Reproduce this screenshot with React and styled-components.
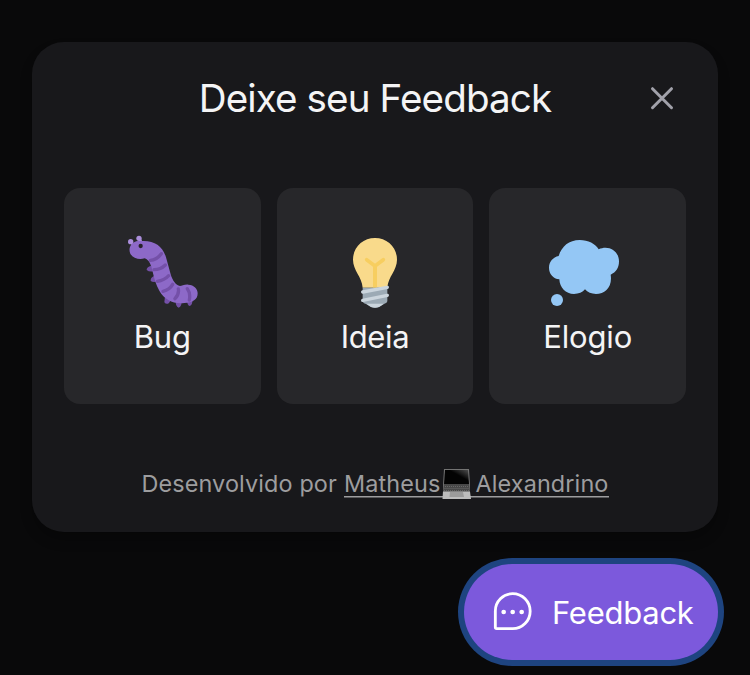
import React from 'react';
import styled, { createGlobalStyle } from 'styled-components';

const GlobalStyle = createGlobalStyle`
  *, *::before, *::after { box-sizing: border-box; }
  body { margin: 0; background: #09090a; font-family: Inter, "Liberation Sans", sans-serif; font-weight: 400; color: #f4f4f5; overflow: hidden; }
  button { font: inherit; color: inherit; border: 0; padding: 0; cursor: pointer; }
`;

const Page = styled.main`
  width: 750px;
  height: 675px;
  padding: 42px 32px 0;
  display: flex;
  flex-direction: column;
  align-items: flex-end;
  gap: 32px;
`;

const Panel = styled.section`
  width: 686px;
  height: 490px;
  padding: 32px;
  border-radius: 32px;
  background: #18181b;
  box-shadow: 0 8px 12px rgba(0, 0, 0, 0.25);
  display: flex;
  flex-direction: column;
`;

const Header = styled.header`
  height: 50px;
  display: grid;
  grid-template-columns: 48px 1fr 48px;
  align-items: center;
`;

const Title = styled.h1`
  grid-column: 2;
  margin: 0;
  font-size: 38.6px;
  font-weight: inherit;
  line-height: 48px;
  padding-bottom: 2px;
  letter-spacing: -0.88px;
  text-align: center;
  white-space: nowrap;
`;

const CloseButton = styled.button`
  width: 48px;
  height: 48px;
  background: none;
  display: grid;
  place-items: center;
`;

const Options = styled.div`
  padding: 64px 0;
  display: grid;
  grid-template-columns: repeat(3, 1fr);
  gap: 16px;
`;

const Option = styled.button`
  height: 216px;
  border-radius: 16px;
  background: #27272a;
  display: flex;
  flex-direction: column;
  align-items: center;
  justify-content: center;
`;

const OptionIcon = styled.svg`
  width: 80px;
  height: 80px;
`;

const OptionLabel = styled.span`
  font-size: 31px;
  line-height: 46px;
  padding-top: 2px;
  letter-spacing: ${({ $tracking }) => $tracking}px;
`;

const Footer = styled.footer`
  height: 32px;
  display: flex;
  justify-content: center;
  gap: 7px;
  color: #9d9d9f;
  font-size: 23.4px;
  line-height: 32px;
  letter-spacing: 0.13px;
  white-space: nowrap;
`;

const AuthorLink = styled.a`
  display: flex;
  background: linear-gradient(#9d9d9f, #9d9d9f) 0 28px / 100% 1.5px no-repeat;
`;

const Laptop = styled.svg`
  width: 30px;
  height: 32px;
  margin: 0 3px 0 2px;
`;

const FeedbackButton = styled.button`
  width: 254px;
  height: 96px;
  border-radius: 48px;
  background: #7c59dc;
  box-shadow: 0 0 0 6px #1e4480;
  color: #fff;
  display: flex;
  align-items: center;
  padding: 0 24px;
  gap: 16px;
  font-size: 31px;
  letter-spacing: -0.25px;
`;

const ChatIcon = styled.svg`
  width: 48px;
  height: 48px;
  flex: none;
`;

const BugArt = () => (
  <OptionIcon viewBox="35 36 240 240" aria-hidden="true">
    <g stroke="#ab8edb" strokeWidth="7" strokeLinecap="round">
      <path d="M63 68l7 8M88 56l6 12" />
    </g>
    <g fill="#ab8edb"><circle cx="61" cy="65" r="8" /><circle cx="86" cy="55" r="8" /></g>
    <path fill="#7450a8" d="M123 137q-15 4-14 13 7 6 20 4zM131 168q-11 5-10 15 8 5 20 1zM164 229l-2 18q6 8 14 2l7-11zM196 241q-1 20 9 22 10-2 9-22zM230 242q1 13 8 16 9-3 8-18z" />
    <path fill="#8d69c8" d="M100 63C135 63 157 80 167 112L181 163C187 183 197 196 209 198C214 198 222 193 234 194C251 195 262 206 262 220C262 239 247 248 222 249C190 253 163 240 147 212C137 194 132 177 127 155C122 136 118 120 103 115C88 120 68 116 60 101C52 83 64 65 83 63Z" />
    <g fill="none" stroke="#7450a8" strokeWidth="10" strokeLinecap="round">
      <path d="M120 121Q139 120 153 101M131 149Q151 149 165 135M141 184Q162 181 175 167M158 214Q178 209 187 193M194 236Q207 222 204 207M237 240Q241 219 231 206" />
    </g>
    <circle cx="91" cy="78" r="6.5" fill="#272229" />
  </OptionIcon>
);

const BulbArt = () => (
  <OptionIcon viewBox="0 21 240 240" aria-hidden="true">
    <path fill="#f9da8b" d="M120 39C157 39 186 67 186 104C186 136 159 155 157 188H83C81 155 54 136 54 104C54 67 83 39 120 39Z" />
    <path fill="none" stroke="#f7ce60" strokeWidth="11" strokeLinecap="round" strokeLinejoin="round" d="M95 104L120 123L145 104" />
    <path stroke="#f7ce60" strokeWidth="12" d="M120 122V188" />
    <path fill="#9caab5" d="M83 188H157V229Q157 234 147 237L132 246Q120 251 108 246L93 237Q83 234 83 228Z" />
    <path fill="none" stroke="#cbd5dd" strokeWidth="10" strokeLinecap="round" d="M83 201L157 187M83 226L157 211" />
    <path fill="#cbd5dd" d="M94 236H146Q139 242 132 246Q120 251 108 246Z" />
  </OptionIcon>
);

const CloudArt = () => (
  <OptionIcon viewBox="39 21 240 240" aria-hidden="true">
    <g fill="#94c7f5">
      <path d="M71 93C80 64 102 45 134 45C160 45 181 56 191 73C221 59 252 78 252 109C252 129 243 142 227 149C233 187 210 207 183 207C169 207 158 202 150 193C143 202 131 207 117 207C92 207 74 188 73 163C54 161 42 146 42 128C42 111 54 96 71 93Z" />
      <circle cx="66" cy="225" r="18" />
    </g>
  </OptionIcon>
);

const LaptopArt = () => (
  <Laptop viewBox="0 0 30 32" aria-hidden="true">
    <defs>
      <linearGradient id="screen" x1="0" y1="1" x2="1" y2="0">
        <stop offset=".6" stopColor="#030303" />
        <stop offset=".72" stopColor="#1c1c1c" />
        <stop offset="1" stopColor="#505050" />
      </linearGradient>
    </defs>
    <path fill="#737373" d="M2 1H27L28 17V24H1V17Z" />
    <path fill="url(#screen)" d="M3 2H26L27 16H2Z" />
    <path fill="#484848" d="M2 16H27L28 24H1Z" />
    <path stroke="#686868" strokeDasharray="1 1" d="M3 18.5H27M2.5 20.5H27M2 22.5H28" />
    <path fill="#bdbdbd" d="M1 23.5H28L29 31H.5Z" />
    <path fill="#9b9b9b" d="M8 24H21L22 29H7.5Z" />
  </Laptop>
);

const options = [
  { label: 'Bug', Art: BugArt, tracking: -0.1 },
  { label: 'Ideia', Art: BulbArt, tracking: -0.35 },
  { label: 'Elogio', Art: CloudArt, tracking: -0.15 },
];

export default function App() {
  return (
    <>
      <GlobalStyle />
      <Page>
        <Panel>
          <Header>
            <Title>Deixe seu Feedback</Title>
            <CloseButton aria-label="Fechar">
              <svg width="32" height="32" viewBox="0 0 32 32" fill="none" stroke="#a1a1aa" strokeWidth="3" strokeLinecap="round">
                <path d="M6.5 5.7L25.5 24.7M25.5 5.7L6.5 24.7" />
              </svg>
            </CloseButton>
          </Header>
          <Options>
            {options.map(({ label, Art, tracking }) => (
              <Option key={label}>
                <Art />
                <OptionLabel $tracking={tracking}>{label}</OptionLabel>
              </Option>
            ))}
          </Options>
          <Footer>
            <span>Desenvolvido por</span>
            <AuthorLink>
              <span>Matheus</span>
              <LaptopArt />
              <span>Alexandrino</span>
            </AuthorLink>
          </Footer>
        </Panel>
        <FeedbackButton>
          <ChatIcon viewBox="114 114 144 144" fill="none" aria-hidden="true">
            <path stroke="#fff" strokeWidth="8.5" d="M188 131A52.5 52.5 0 0 1 188 236H140Q136 236 136 232V183A52 52 0 0 1 188 131Z" />
            <g fill="#fff"><circle cx="161" cy="186" r="7" /><circle cx="188" cy="186" r="7" /><circle cx="215" cy="186" r="7" /></g>
          </ChatIcon>
          <span>Feedback</span>
        </FeedbackButton>
      </Page>
    </>
  );
}
